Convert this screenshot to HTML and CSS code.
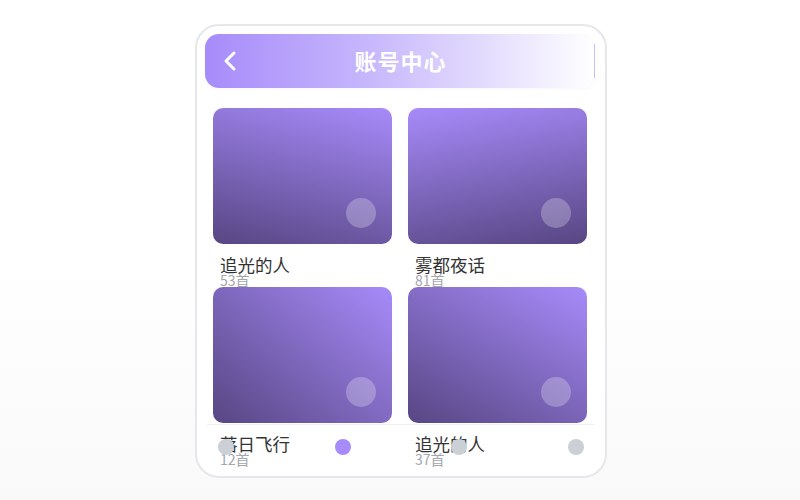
FILE: index.html
```html
<!DOCTYPE html>
<html lang="zh-CN">
<head>
  <meta charset="UTF-8">
  <meta name="viewport" content="width=device-width, initial-scale=1.0">
  <title>账号中心</title>
  <link rel="stylesheet" href="styles.css">
</head>
<body>
  <div class="phone">
    <div class="header">
      <span class="back">
        <svg width="14" height="22" viewBox="0 0 14 22"><path d="M11 3 L3 11 L11 19" fill="none" stroke="#fff" stroke-width="3" stroke-linecap="round" stroke-linejoin="round"/></svg>
      </span>
      <h1>账号中心</h1>
      <span class="edge"></span>
    </div>
    <div class="grid">
      <div class="item">
        <div class="cover c1"><span class="play"></span></div>
        <div class="name">追光的人</div>
        <div class="count">53首</div>
      </div>
      <div class="item">
        <div class="cover c2"><span class="play"></span></div>
        <div class="name">雾都夜话</div>
        <div class="count">81首</div>
      </div>
      <div class="item">
        <div class="cover c3"><span class="play"></span></div>
        <div class="name">落日飞行</div>
        <div class="count">12首</div>
      </div>
      <div class="item">
        <div class="cover c4"><span class="play"></span></div>
        <div class="name">追光的人</div>
        <div class="count">37首</div>
      </div>
    </div>
    <div class="nav">
      <span class="dot"></span>
      <span class="dot active"></span>
      <span class="dot"></span>
      <span class="dot"></span>
    </div>
  </div>
</body>
</html>
```

FILE: styles.css
```css
body {
  font-family: "Noto Sans CJK SC", "Noto Sans", sans-serif;
  background: linear-gradient(#ffffff 50%, #f9f9fa);
  display: flex;
  justify-content: center;
  align-items: center;
  box-sizing: border-box;
  height: 100vh;
  margin: 0;
  padding: 2px 0 0 2px;
}
.phone {
  position: relative;
  box-sizing: border-box;
  width: 412px;
  height: 454px;
  background-color: white;
  border: 2px solid #e6e7ea;
  border-radius: 24px;
  overflow: hidden;
}
.header {
  position: relative;
  display: flex;
  align-items: center;
  justify-content: center;
  height: 54px;
  margin: 8px 9px 0 8px;
  border-radius: 14px;
  background: linear-gradient(90deg, #a78bfa, #c5b5fc 40%, #ffffff);
  box-shadow: 0 1px 3px rgba(0, 0, 0, 0.04);
}
.header h1 {
  margin: 0 0 2px;
  color: white;
  font-size: 22px;
  font-weight: 700;
  letter-spacing: 1px;
}
.back {
  position: absolute;
  left: 18px;
  top: 16px;
  display: flex;
}
.edge {
  position: absolute;
  right: 1px;
  top: 10px;
  width: 1px;
  height: 34px;
  background-color: #c9bdf8;
}
.grid {
  display: grid;
  grid-template-columns: 1fr 1fr;
  column-gap: 16px;
  padding: 20px 18px 0 16px;
}
.item {
  height: 179px;
}
.cover {
  display: flex;
  justify-content: flex-end;
  align-items: flex-end;
  box-sizing: border-box;
  height: 136px;
  padding: 16px;
  border-radius: 10px;
}
.c1 { background: linear-gradient(195deg, #a78bfa, #574683); }
.c2 { background: linear-gradient(170deg, #a78bfa, #574683); }
.c3 { background: linear-gradient(220deg, #a78bfa, #574683); }
.c4 { background: linear-gradient(210deg, #a78bfa, #574683); }
.play {
  width: 30px;
  height: 30px;
  border-radius: 50%;
  background-color: rgba(255, 255, 255, 0.25);
}
.name {
  margin-top: 12px;
  padding-left: 7px;
  color: #333;
  font-size: 17.5px;
  line-height: 18px;
}
.count {
  padding-left: 7px;
  color: #a3a6ad;
  font-size: 14px;
  line-height: 13px;
}
.nav {
  position: absolute;
  left: 10px;
  right: 10px;
  bottom: 7px;
  height: 44px;
  display: flex;
  justify-content: space-between;
  align-items: center;
  padding: 0 11px;
  border-top: 1px solid #f0f0f2;
}
.dot {
  width: 16px;
  height: 16px;
  border-radius: 50%;
  background-color: #cbcfd6;
}
.dot.active {
  background-color: #a78bfa;
}
```
